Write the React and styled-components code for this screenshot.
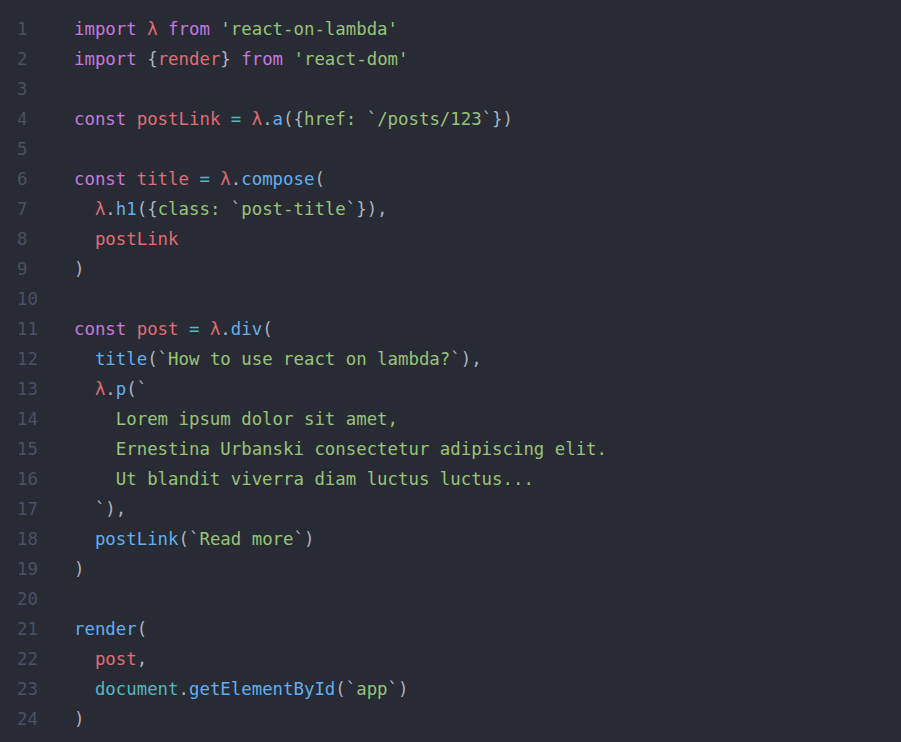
import React from 'react';
import styled, { createGlobalStyle } from 'styled-components';

const Global = createGlobalStyle`
  html, body { margin: 0; padding: 0; background: #282b34; }
`;

const Editor = styled.div`
  background: #282b34;
  min-height: 742px;
  box-sizing: border-box;
  padding-top: 14px;
  font-family: "DejaVu Sans Mono", "Liberation Mono", monospace;
  font-size: 17.36px;
`;

const Row = styled.div`
  display: flex;
  height: 30px;
  line-height: 30px;
  white-space: pre;
`;

const Num = styled.span`
  width: 57px;
  padding-left: 17px;
  flex: none;
  color: #495162;
`;

const Code = styled.span`
  color: #abb2bf;
`;

const colors = {
  k: '#c678dd',
  v: '#e06c75',
  s: '#98c379',
  f: '#61afef',
  o: '#56b6c2',
  c: '#56b6c2',
  p: '#abb2bf',
};

const Tok = styled.span`
  color: ${(p) => colors[p.$t]};
`;

const lines = [
  [['k', 'import'], ['p', ' '], ['v', 'λ'], ['p', ' '], ['k', 'from'], ['p', ' '], ['s', "'react-on-lambda'"]],
  [['k', 'import'], ['p', ' {'], ['v', 'render'], ['p', '} '], ['k', 'from'], ['p', ' '], ['s', "'react-dom'"]],
  [],
  [['k', 'const'], ['p', ' '], ['v', 'postLink'], ['p', ' '], ['o', '='], ['p', ' '], ['v', 'λ'], ['p', '.'], ['f', 'a'], ['p', '({'], ['s', 'href: '], ['p', '`'], ['s', '/posts/123'], ['p', '`})']],
  [],
  [['k', 'const'], ['p', ' '], ['v', 'title'], ['p', ' '], ['o', '='], ['p', ' '], ['v', 'λ'], ['p', '.'], ['f', 'compose'], ['p', '(']],
  [['p', '  '], ['v', 'λ'], ['p', '.'], ['f', 'h1'], ['p', '({'], ['s', 'class: '], ['p', '`'], ['s', 'post-title'], ['p', '`}),']],
  [['p', '  '], ['v', 'postLink']],
  [['p', ')']],
  [],
  [['k', 'const'], ['p', ' '], ['v', 'post'], ['p', ' '], ['o', '='], ['p', ' '], ['v', 'λ'], ['p', '.'], ['f', 'div'], ['p', '(']],
  [['p', '  '], ['f', 'title'], ['p', '(`'], ['s', 'How to use react on lambda?'], ['p', '`),']],
  [['p', '  '], ['v', 'λ'], ['p', '.'], ['f', 'p'], ['p', '(`']],
  [['s', '    Lorem ipsum dolor sit amet,']],
  [['s', '    Ernestina Urbanski consectetur adipiscing elit.']],
  [['s', '    Ut blandit viverra diam luctus luctus...']],
  [['p', '  `),']],
  [['p', '  '], ['f', 'postLink'], ['p', '(`'], ['s', 'Read more'], ['p', '`)']],
  [['p', ')']],
  [],
  [['f', 'render'], ['p', '(']],
  [['p', '  '], ['v', 'post'], ['p', ',']],
  [['p', '  '], ['c', 'document'], ['p', '.'], ['f', 'getElementById'], ['p', '(`'], ['s', 'app'], ['p', '`)']],
  [['p', ')']],
];

export default function App() {
  return (
    <>
      <Global />
      <Editor>
        {lines.map((toks, i) => (
          <Row key={i}>
            <Num>{i + 1}</Num>
            <Code>
              {toks.map(([t, text], j) => (
                <Tok key={j} $t={t}>{text}</Tok>
              ))}
            </Code>
          </Row>
        ))}
      </Editor>
    </>
  );
}
